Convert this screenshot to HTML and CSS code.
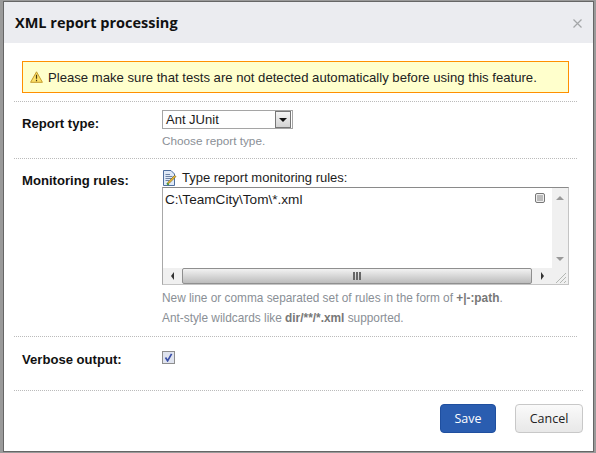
FILE: index.html
```html
<!DOCTYPE html>
<html lang="en">
  <head>
    <meta charset="UTF-8" />
    <title>XML report processing</title>
    <link rel="stylesheet" href="styles.css">
  </head>
  <body>
    <div class="dialog">
      <div class="dialog-title">
        <h3>XML report processing</h3>
        <svg class="close-icon" width="9" height="9" viewBox="0 0 9 9">
          <path d="M0.5 0.5L8.5 8.5M8.5 0.5L0.5 8.5" stroke="#a4a6a8" stroke-width="1.2" fill="none" />
        </svg>
      </div>

      <div class="dialog-body">
        <div class="warning">
          <svg class="warning-icon" width="13" height="12" viewBox="0 0 13 12">
            <path d="M6.5 0.8L12.4 11.3H0.6Z" fill="#fde26a" stroke="#c49a2c" stroke-width="1" stroke-linejoin="round" />
            <path d="M6.5 3.8V7.8M6.5 8.8V10.2" stroke="#4a3a10" stroke-width="1.2" />
          </svg>
          <span>Please make sure that tests are not detected automatically before using this feature.</span>
        </div>

        <div class="row row-type">
          <label class="row-label">Report type:</label>
          <div class="row-field">
            <div class="select">
              <span class="select-value">Ant JUnit</span>
              <span class="select-button"><i class="arrow-down"></i></span>
            </div>
            <div class="note">Choose report type.</div>
          </div>
        </div>

        <div class="row row-rules">
          <label class="row-label">Monitoring rules:</label>
          <div class="row-field">
            <div class="editor-label">
              <svg width="15" height="16" viewBox="0 0 15 16">
                <path d="M1.5 0.5H9L12.5 4V15.5H1.5Z" fill="#dfe9f7" stroke="#4f6f9f" />
                <path d="M3.5 4.5H8M3.5 6.5H10.5M3.5 8.5H10.5M3.5 10.5H7" stroke="#6d83a6" />
                <path d="M14 6.5L7.5 13L5.5 14.5L6 12.2L12.5 5.5Z" fill="#eebc34" stroke="#80651c" stroke-width="0.7" />
                <path d="M4.8 13.2L6.8 15" stroke="#3f9b3f" stroke-width="1.4" />
              </svg>
              <span>Type report monitoring rules:</span>
            </div>
            <div class="editor">
              <div class="editor-main">
                <div class="editor-text">
                  <span>C:\TeamCity\Tom\*.xml</span>
                  <svg class="editor-menu" width="10" height="10" viewBox="0 0 10 10">
                    <rect x="0.5" y="0.5" width="9" height="9" rx="1.5" fill="#eee" stroke="#777" />
                    <path d="M2 3H8M2 5H8M2 7H8" stroke="#888" />
                  </svg>
                </div>
                <div class="scroll-v">
                  <i class="arrow-up"></i>
                  <i class="arrow-down arrow-light"></i>
                </div>
              </div>
              <div class="scroll-h">
                <span class="scroll-btn"><i class="arrow-left"></i></span>
                <span class="scroll-thumb"><b></b><b></b><b></b></span>
                <span class="scroll-btn scroll-btn-right"><i class="arrow-right"></i></span>
                <svg class="grip" width="13" height="13" viewBox="0 0 13 13">
                  <path d="M12 2L2 12M12 6L6 12M12 10L10 12" stroke="#b4b8b4" fill="none" />
                </svg>
              </div>
            </div>
            <div class="note note-rules">New line or comma separated set of rules in the form of <b>+|-:path</b>.</div>
            <div class="note note-rules">Ant-style wildcards like <b>dir/**/*.xml</b> supported.</div>
          </div>
        </div>

        <div class="row row-verbose">
          <label class="row-label">Verbose output:</label>
          <div class="row-field">
            <span class="checkbox">
              <svg width="9" height="9" viewBox="0 0 9 9">
                <path d="M1.5 4.5L3.6 7.8L7.6 0.8" stroke="#3a4fa8" stroke-width="1.7" fill="none" />
              </svg>
            </span>
          </div>
        </div>

        <div class="buttons">
          <button type="button" class="btn btn-save">Save</button>
          <button type="button" class="btn btn-cancel">Cancel</button>
        </div>
      </div>
    </div>
  </body>
</html>
```

FILE: styles.css
```css
html,
body {
  height: 100%;
}

body {
  margin: 0;
  padding: 1px 2px 1px 3px;
  box-sizing: border-box;
  background-color: #9a9a9a;
  font-family: "Liberation Sans", Arial, sans-serif;
  font-size: 13px;
  color: #1c1c1c;
  overflow: hidden;
}

.dialog {
  height: 100%;
  box-sizing: border-box;
  border: 1px solid #666;
  background-color: #fff;
  display: flex;
  flex-direction: column;
}

.dialog-title {
  height: 41px;
  padding: 0 11px;
  background-color: #ebecf0;
  display: flex;
  align-items: center;
  justify-content: space-between;
  flex-shrink: 0;
}

.dialog-title h3 {
  margin: 0;
  font-family: "Open Sans", sans-serif;
  font-size: 14.5px;
  font-weight: 700;
  color: #111;
}

.close-icon {
  margin-top: 2px;
}

.dialog-body {
  flex: 1;
  padding: 18px 16px 0 10px;
  display: flex;
  flex-direction: column;
}

.warning {
  margin: 0 8px;
  height: 30px;
  border: 1px solid #ff9000;
  background-color: #ffffcc;
  display: flex;
  align-items: center;
  padding-left: 7px;
  font-size: 13.13px;
  color: #222;
  flex-shrink: 0;
}

.warning-icon {
  margin-right: 5px;
  flex-shrink: 0;
}

.row {
  display: flex;
  border-top: 1px dotted #bbb;
  padding-left: 8px;
  box-sizing: border-box;
  flex-shrink: 0;
}

.row-type {
  margin-top: 8px;
  height: 57px;
  padding-top: 8px;
}

.row-rules {
  height: 178px;
  padding-top: 9px;
}

.row-verbose {
  height: 54px;
  padding-top: 14px;
}

.row-label {
  width: 140px;
  flex-shrink: 0;
  font-weight: 700;
  font-size: 13.1px;
  color: #111;
  padding-top: 6px;
}

.row-rules .row-label {
  padding-top: 5px;
}

.row-verbose .row-label {
  padding-top: 1px;
}

.row-field {
  flex: 1;
}

.select {
  width: 129px;
  height: 17px;
  border: 1px solid #a5a5a5;
  display: flex;
  justify-content: space-between;
}

.select-value {
  padding-left: 3px;
  line-height: 18px;
}

.select-button {
  width: 16px;
  box-sizing: border-box;
  border: 1px solid #777;
  margin: 0 1px 0 0;
  background: linear-gradient(#f4f4f4, #d4d4d4);
  display: flex;
  align-items: center;
  justify-content: center;
}

.arrow-down {
  width: 0;
  height: 0;
  border-left: 4px solid transparent;
  border-right: 4px solid transparent;
  border-top: 4px solid #111;
}

.arrow-light {
  border-top-color: #999;
}

.arrow-up {
  width: 0;
  height: 0;
  border-left: 4px solid transparent;
  border-right: 4px solid transparent;
  border-bottom: 4px solid #999;
}

.arrow-left {
  width: 0;
  height: 0;
  border-top: 4px solid transparent;
  border-bottom: 4px solid transparent;
  border-right: 3px solid #333;
}

.arrow-right {
  width: 0;
  height: 0;
  border-top: 4px solid transparent;
  border-bottom: 4px solid transparent;
  border-left: 3px solid #333;
}

.note {
  color: #8a8f96;
  font-size: 11.75px;
  margin-top: 5px;
}

.note b {
  color: #777;
}

.note-rules {
  margin-top: 6px;
  font-size: 11.85px;
  line-height: 14px;
}

.editor-label {
  display: flex;
  align-items: center;
  gap: 5px;
  height: 19px;
}

.editor {
  width: 407px;
  height: 98px;
  box-sizing: border-box;
  border: 1px solid #c4c4c4;
  border-top-color: #8a8a8a;
  border-left-color: #a8a8a8;
  display: flex;
  flex-direction: column;
}

.editor-main {
  flex: 1;
  display: flex;
  min-height: 0;
}

.editor-text {
  flex: 1;
  padding: 4px 3px 4px 2px;
  display: flex;
  justify-content: space-between;
  font-size: 13.6px;
}

.editor-menu {
  margin: 1px 4px 0 0;
}

.scroll-v {
  width: 16px;
  background-color: #f0f0f0;
  display: flex;
  flex-direction: column;
  justify-content: space-between;
  align-items: center;
  padding: 8px 0 7px;
  box-sizing: border-box;
}

.scroll-h {
  height: 16px;
  display: flex;
  align-items: stretch;
  background-color: #f0f0f0;
}

.scroll-btn {
  width: 19px;
  display: flex;
  align-items: center;
  justify-content: center;
  flex-shrink: 0;
}

.scroll-btn-right {
  width: 20px;
}

.scroll-thumb {
  flex: 1;
  box-sizing: border-box;
  border: 1px solid #8f8f8f;
  border-radius: 2px;
  background: linear-gradient(#f2f2f2, #bcbcbc);
  display: flex;
  align-items: center;
  justify-content: center;
  gap: 1px;
}

.scroll-thumb b {
  width: 2px;
  height: 8px;
  background-color: #666;
}

.grip {
  margin: 3px 1px 0 2px;
}

.checkbox {
  width: 11px;
  height: 11px;
  border: 1px solid #8e8e8e;
  background-color: #dfe3ee;
  display: flex;
  align-items: center;
  justify-content: center;
}

.buttons {
  display: flex;
  justify-content: flex-end;
  gap: 19px;
  padding-top: 13px;
  margin-right: -6px;
  border-top: 1px dotted #bbb;
}

.btn {
  height: 29px;
  font-family: "Open Sans", sans-serif;
  font-size: 12.5px;
  padding: 0;
  border-radius: 4px;
}

.btn-save {
  width: 56px;
  background-color: #2a5db0;
  border: 1px solid #1f4f9f;
  color: #fff;
}

.btn-cancel {
  width: 68px;
  background: linear-gradient(#fafafa, #e8e8e8);
  border: 1px solid #c8c8c8;
  color: #222;
}
```
